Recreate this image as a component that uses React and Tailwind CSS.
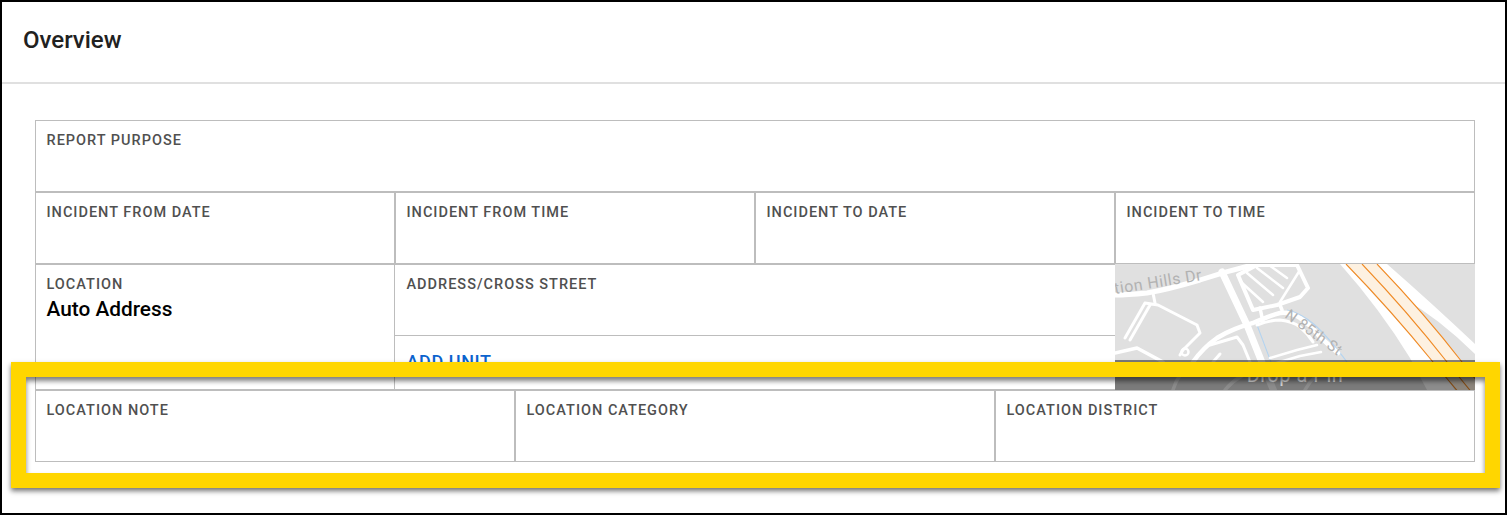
import React from 'react';

const Field = ({ label, className = '', children }) => (
  <div className={`border border-[#bdbdbd] pl-[10.5px] pr-[11px] pt-[11px] ${className}`}>
    <div className="text-[14.5px] leading-[18px] font-medium tracking-[1px] text-[#505050]">{label}</div>
    {children}
  </div>
);

const MapThumb = () => (
  <div className="relative w-[360px] h-[126px] overflow-hidden bg-[#e0e0e0]">
    <svg width="360" height="126" viewBox="0 0 360 126" fill="none" className="block">
      {/* highway */}
      <path d="M225 0Q265 45 295 94L312 126H340L322 100L231 0Z" fill="#fff" />
      <path d="M258 0H272Q320 42 362 82V92Q325 55 288 34Z" fill="#fff" />
      <path d="M231 0H262Q310 50 347 98L372 130H345L318 98Q275 45 231 0Z" fill="#fdf1e1" />
      <path d="M231 0Q275 45 318 98L345 130" stroke="#f08a24" strokeWidth="1.1" />
      <path d="M247 0Q292 47 332 98L358 130" stroke="#f08a24" strokeWidth="1.1" />
      <path d="M262 0Q310 50 347 98L372 130" stroke="#f08a24" strokeWidth="1.1" />
      {/* water lines */}
      <path d="M172 46C190 50 205 62 232 98M142 61L162 114" stroke="#b4d4f0" strokeWidth="1.1" />
      {/* roads */}
      <g stroke="#fff" strokeLinejoin="round" strokeLinecap="round">
        <path d="M0 31C12 31 22 30 32 29C50 26 68 21 85 16C100 11 120 5 142 0" strokeWidth="5" />
        <path d="M107 8L132 61L148 101L160 130" strokeWidth="7" />
        <path d="M38 29L40 39" strokeWidth="3" />
        <path d="M30 39L43 41L82 61L85 69L68 86L65 91M30 39L10 74M35 41L15 76" strokeWidth="3" />
        <path d="M0 89L22 84L48 98" strokeWidth="3.5" />
        <circle cx="70" cy="88" r="3.5" strokeWidth="2.5" />
        <path d="M123 11L142 1H182L193 24L185 33L162 41L138 46Z" strokeWidth="4" />
        <path d="M126 18L148 38M132 9L158 31M142 4L168 24M154 1L172 14M165 38L185 6" strokeWidth="2.5" />
        <path d="M145 44L148 58M165 41L167 46" strokeWidth="3.5" />
        <path d="M78 98C85 88 92 81 102 74C115 66 125 63 138 59C148 55 156 51 165 49C173 48 179 50 185 54C195 60 200 67 205 73L223 89" strokeWidth="4.5" />
        <path d="M142 61C150 58 158 56 165 56C173 57 180 59 185 63C191 68 195 73 198 78" strokeWidth="3" />
        <path d="M155 94L182 86L202 81M158 100L185 92L206 88" strokeWidth="2.5" />
        <path d="M95 81L122 73L128 81L135 98M98 98L105 90" strokeWidth="3" />
        <path d="M58 126C62 112 70 104 78 98M110 126C118 116 130 108 148 104M190 126C195 116 205 108 215 104" strokeWidth="3.5" />
      </g>
      <g fill="#b2b2b2" fontFamily="Roboto, sans-serif" fontSize="16" letterSpacing="0.5">
        <text x="0" y="30" transform="rotate(-9 0 30)">tion Hills Dr</text>
        <text x="169" y="53" fontSize="15" transform="rotate(36 169 53)">N 85th St</text>
      </g>
    </svg>
    <div className="absolute left-0 right-0 bottom-0 h-[30px] bg-black/45 flex items-center justify-center text-white/70 text-[20px] tracking-[0.5px]">
      Drop a Pin
    </div>
  </div>
);

export default function App() {
  return (
    <div className="relative w-[1507px] h-[515px] overflow-hidden border-2 border-black bg-white font-['Roboto',sans-serif]">
      <div className="h-[82px] border-b-2 border-[#e0e0e0] pl-[21px] pt-[22px] text-[24px] leading-[32px] font-medium text-[#212121]">
        Overview
      </div>
      <div className="pl-[33px] pt-[36px]">
        <div className="w-[1440px]">
          <Field label="REPORT PURPOSE" className="h-[72px]" />
          <div className="flex">
            {['INCIDENT FROM DATE', 'INCIDENT FROM TIME', 'INCIDENT TO DATE', 'INCIDENT TO TIME'].map((label) => (
              <Field key={label} label={label} className="w-[360px] h-[72px]" />
            ))}
          </div>
          <div className="flex h-[126px]">
            <Field label="LOCATION" className="w-[360px]">
              <div className="text-[20.8px] leading-[26px] font-medium text-black mt-[2px]">Auto Address</div>
            </Field>
            <div className="w-[720px]">
              <div className="h-[72px] border-t border-b border-[#bdbdbd] px-[11.5px] pt-[11px] text-[14.5px] leading-[18px] font-medium tracking-[1px] text-[#505050]">
                ADDRESS/CROSS STREET
              </div>
              <div className="h-[54px] border-b border-[#bdbdbd] px-[11.5px] pt-[16px] text-[18px] leading-[20px] font-medium tracking-[0.6px] text-[#0b63ce]">
                ADD UNIT
              </div>
            </div>
            <MapThumb />
          </div>
          <div className="flex">
            {['LOCATION NOTE', 'LOCATION CATEGORY', 'LOCATION DISTRICT'].map((label) => (
              <Field key={label} label={label} className="w-[480px] h-[72px]" />
            ))}
          </div>
        </div>
      </div>
      {/* yellow callout drawn over the last row */}
      <div className="absolute left-[9px] top-[360px] w-[1489px] h-[126px] border-[15px] border-[#ffd600] shadow-[0_3px_5px_rgba(0,0,0,0.55),inset_0_4px_5px_rgba(0,0,0,0.5)]" />
    </div>
  );
}
